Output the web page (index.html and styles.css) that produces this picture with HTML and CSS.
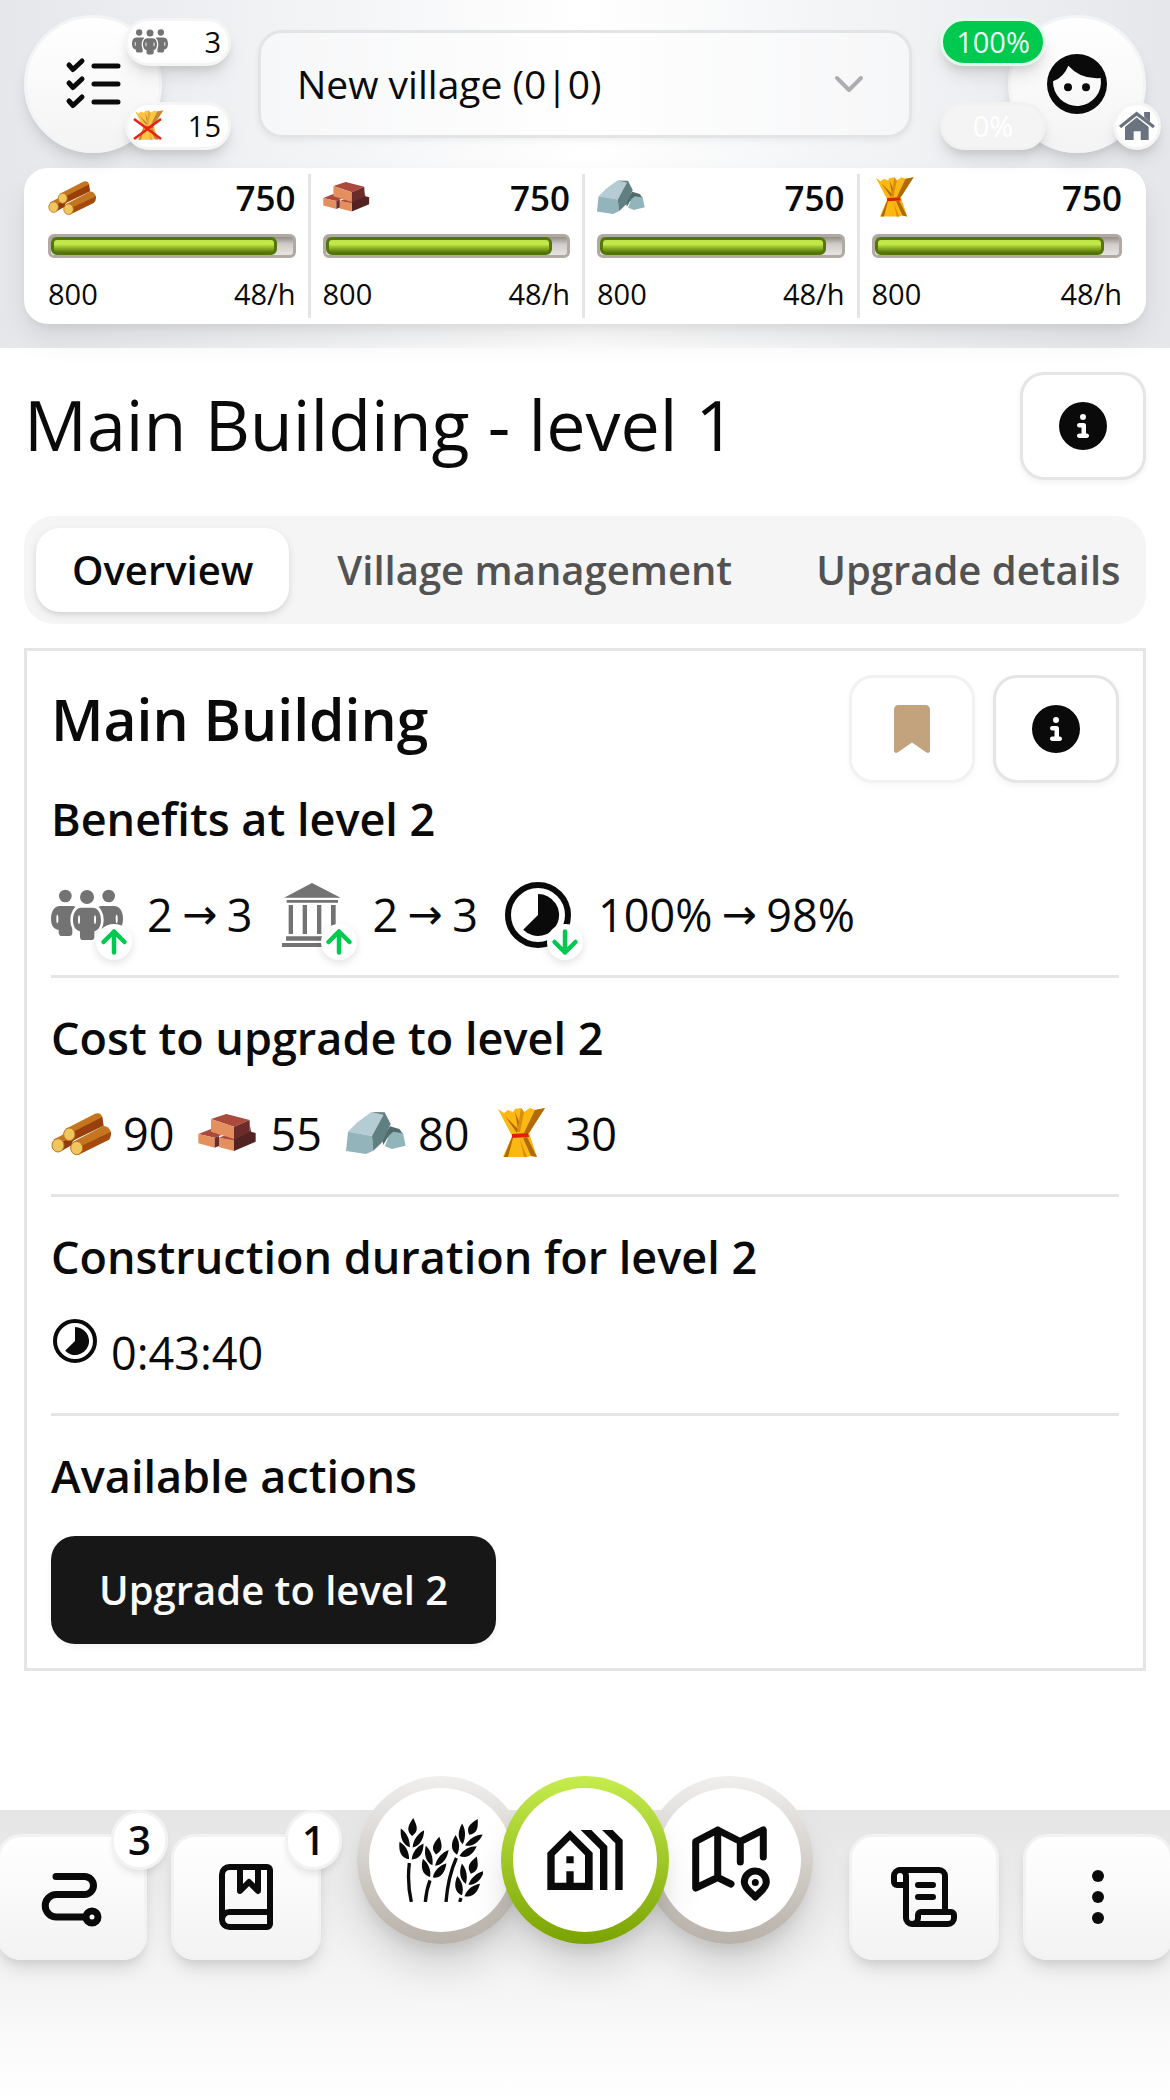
FILE: index.html
```html
<!DOCTYPE html>
<html lang="en">
<head>
<meta charset="utf-8">
<meta name="viewport" content="width=device-width, initial-scale=1">
<title>Main Building - level 1</title>
<link rel="stylesheet" href="styles.css">
</head>
<body>
<svg class="sprite" aria-hidden="true">
  <symbol id="i-info" viewBox="0 0 512 512"><path d="M256 512A256 256 0 1 0 256 0a256 256 0 1 0 0 512zM216 336h24V272H216c-13.3 0-24-10.7-24-24s10.7-24 24-24h48c13.3 0 24 10.7 24 24v88h8c13.3 0 24 10.7 24 24s-10.7 24-24 24H216c-13.3 0-24-10.7-24-24s10.7-24 24-24zm40-208a32 32 0 1 1 0 64 32 32 0 1 1 0-64z"/></symbol>
  <symbol id="i-people" viewBox="33 27 216 216">
    <g fill="#737373">
      <circle cx="76" cy="78" r="19"/><circle cx="206" cy="78" r="19"/><circle cx="141" cy="81" r="21"/>
      <path d="M60 108H96C105 108 110 112 108 118L97 140V190Q97 198 88 198H66Q57 198 56 188V180C40 178 33 165 33 147C33 125 42 108 60 108Z"/>
      <path d="M222 108H186C177 108 172 112 174 118L185 140V190Q185 198 194 198H216Q225 198 226 188V180C242 178 249 165 249 147C249 125 240 108 222 108Z"/>
      <path stroke="#fff" stroke-width="16" paint-order="stroke" d="M124 113H158C174 113 183 130 183 150C183 168 176 180 163 184V200Q163 210 153 210H129Q120 210 120 200V184C106 180 99 168 99 150C99 130 108 113 124 113Z"/>
    </g>
    <g fill="#fff"><ellipse cx="52" cy="147" rx="3" ry="13"/><ellipse cx="230" cy="147" rx="3" ry="13"/><ellipse cx="117" cy="149" rx="3" ry="13"/><ellipse cx="165" cy="149" rx="3" ry="13"/></g>
  </symbol>
  <symbol id="i-bank" viewBox="708 27 216 216"><path fill="#737373" d="M732 83L816 39L902 83ZM740 90H894V98H740ZM746 105H759V192H746ZM788 105H801V192H788ZM831 105H844V192H831ZM873 105H887V192H873ZM738 199H895V212H738ZM726 219H907V231H726Z"/></symbol>
  <symbol id="i-clock" viewBox="0 0 72 72"><circle cx="36" cy="36" r="30" fill="none" stroke="currentColor" stroke-width="6"/><path d="M36 36V15A21 21 0 1 1 21.2 50.8Z"/></symbol>
  <symbol id="i-wood" viewBox="33 705 180 180">
    <path fill="#c4751f" d="M40 812L76 793L104 812L70 842Z"/><path fill="#8f3c0c" d="M66 818L100 806L96 828L64 846Z"/>
    <path fill="#c4751f" d="M100 818L190 771Q206 770 213 790L128 838Z"/><path fill="#a34a0c" d="M126 830L213 788Q214 808 204 814L116 857Z"/>
    <path fill="#c4751f" d="M76 780L165 734Q184 728 188 748L98 798Z"/><path fill="#983f0b" d="M100 788L187 744L191 770L98 815Z"/>
    <g fill="#eec65b" stroke="#bd7020" stroke-width="3"><ellipse cx="54" cy="829" rx="18" ry="20"/><ellipse cx="88" cy="796" rx="17" ry="19"/><ellipse cx="110" cy="837" rx="18" ry="20"/></g>
  </symbol>
  <symbol id="i-brick" viewBox="477 705 180 180">
    <path fill="#532323" d="M585 808L632 786V764L636 788L650 792V818L585 846Z"/>
    <path fill="#aa4a3d" d="M516 750L562 735L632 753L585 773ZM478 795L516 780L556 794L527 806ZM540 806L562 797L585 804V816Z"/>
    <path fill="#e48f5e" d="M516 750L585 773V810L516 788ZM478 795L527 806V836L478 823ZM540 806L585 814V846L540 834Z"/>
    <path fill="#6c2d2a" d="M585 773L632 753V790L585 812ZM527 806L540 801V831L527 836Z"/>
  </symbol>
  <symbol id="i-stone" viewBox="924 705 180 180">
    <path fill="#4f6b6c" d="M1056 772L1084 780L1096 796L1048 806L1036 828L1032 810Z"/>
    <path fill="#b5ccd4" d="M930 788L958 760L999 730L1042 736L1002 801Z"/>
    <path fill="#93b4bb" d="M930 788L1002 801L1006 845L984 855L924 846Z"/>
    <path fill="#607f81" d="M999 729L1040 730L1058 765L1034 818L1006 845L1002 801L1037 737Z"/>
    <path fill="#92b5bc" d="M1052 800L1066 788L1095 793L1103 830L1062 840L1041 832Z"/>
  </symbol>
  <symbol id="i-wheat" viewBox="0 0 60 60">
    <path fill="#fbb712" d="M5 5L11 9L15 6L20 8L22 5L28 4L31 8L37 4L42 6L52 4L36 29L44 53L38 52L34 53H10L19 32Z"/>
    <path fill="#b26a08" d="M42 6L52 4L36 29H31ZM34 33L44 53L38 52L30 34ZM20 34L15 53H11L19 33ZM12 12L24 29L27 20L22 8L25 25Z"/>
    <path fill="#dc8d0b" d="M28 4L31 8L27 28H24ZM27 35L31 53H34Z"/>
    <path fill="#de210d" d="M19 30L35 29L36 33L19 34Z"/>
  </symbol>
  <symbol id="i-up" viewBox="0 0 24 24"><path fill="none" stroke="currentColor" stroke-width="3" stroke-linecap="round" stroke-linejoin="round" d="M5 12L12 5L19 12M12 19V5"/></symbol>
  <symbol id="i-down" viewBox="0 0 24 24"><path fill="none" stroke="currentColor" stroke-width="3" stroke-linecap="round" stroke-linejoin="round" d="M5 12L12 19L19 12M12 19V5"/></symbol>
  <g id="ear">
    <path d="M0 -72C-17 -86 -17 -98 0 -126C17 -98 17 -86 0 -72ZM-4 -38C-5 -62 -18 -82 -35 -92C-36 -66 -26 -44 -4 -38ZM4 -38C5 -62 18 -82 35 -92C36 -66 26 -44 4 -38ZM-4 -2C-5 -26 -18 -42 -36 -52C-38 -24 -28 -4 -4 -2ZM4 -2C5 -26 18 -42 36 -52C38 -24 28 -4 4 -2Z"/>
  </g>
</svg>

<header class="topbar">
  <div class="topbar-row">
    <div class="avatar">
      <button class="round-btn" aria-label="Tasks">
        <svg class="icon-60" viewBox="0 0 60 60" fill="none" stroke="currentColor" stroke-width="5" stroke-linecap="round" stroke-linejoin="round"><path d="M6 11L10 15.500L19 7M31 12H55M6 29L10 33.500L19 25M31 30H55M6 47L10 51.500L19 43M31 48H55"/></svg>
      </button>
      <span class="pill pill-stat pill-right pill-top"><svg class="icon-36"><use href="#i-people"/></svg>3</span>
      <span class="pill pill-stat pill-right pill-bottom">
        <svg class="icon-36" viewBox="0 0 36 36"><use href="#i-wheat" width="36" height="36" opacity=".8"/><path d="M2 11L29 31M29 11L2 31" stroke="#ea2013" stroke-width="2.500"/></svg>15</span>
    </div>
    <div class="village">
      <select class="village-select" aria-label="Village"><option>New village (0|0)</option></select>
      <svg class="village-chevron" viewBox="0 0 24 24" fill="none" stroke="currentColor" stroke-width="2" stroke-linecap="round" stroke-linejoin="round"><path d="M6 9l6 6 6-6"/></svg>
    </div>
    <div class="avatar">
      <button class="round-btn" aria-label="Hero">
        <svg class="icon-60" viewBox="351 131 180 180"><path fill-rule="evenodd" d="M441 131A90 90 0 1 1 441 311A90 90 0 1 1 441 131ZM369 213Q402 200 415 166Q452 208 512 203A72 72 0 1 1 369 213Z"/><circle cx="414" cy="231" r="12"/><circle cx="468" cy="231" r="12"/></svg>
      </button>
      <span class="pill pill-left pill-top pill-green">100%</span>
      <span class="pill pill-left pill-bottom pill-faded">0%</span>
      <span class="pill pill-home pill-bottom"><svg class="icon-36" viewBox="567 294 108 108"><path d="M585 350L620 320L656 350V390H632V364H611V390H585ZM643 306H660V336L643 322Z"/><path d="M570 351L620 311L672 351" fill="none" stroke="#fff" stroke-width="18"/><path d="M643 306H660V336L643 322Z"/><path d="M570 351L620 311L672 351" fill="none" stroke="currentColor" stroke-width="10"/></svg></span>
    </div>
  </div>
  <section class="resources" aria-label="Resources">
    <div class="resource">
      <div class="resource-line"><svg class="icon-48"><use href="#i-wood"/></svg><strong class="amount">750</strong></div>
      <div class="bar" role="progressbar" aria-valuenow="750" aria-valuemax="800" aria-label="Wood"><div class="bar-fill" style="width:93.75%"></div></div>
      <div class="resource-line resource-meta"><span>800</span><span>48/h</span></div>
    </div>
    <div class="resource">
      <div class="resource-line"><svg class="icon-48"><use href="#i-brick"/></svg><strong class="amount">750</strong></div>
      <div class="bar" role="progressbar" aria-valuenow="750" aria-valuemax="800" aria-label="Clay"><div class="bar-fill" style="width:93.75%"></div></div>
      <div class="resource-line resource-meta"><span>800</span><span>48/h</span></div>
    </div>
    <div class="resource">
      <div class="resource-line"><svg class="icon-48"><use href="#i-stone"/></svg><strong class="amount">750</strong></div>
      <div class="bar" role="progressbar" aria-valuenow="750" aria-valuemax="800" aria-label="Iron"><div class="bar-fill" style="width:93.75%"></div></div>
      <div class="resource-line resource-meta"><span>800</span><span>48/h</span></div>
    </div>
    <div class="resource">
      <div class="resource-line"><svg class="icon-48"><use href="#i-wheat"/></svg><strong class="amount">750</strong></div>
      <div class="bar" role="progressbar" aria-valuenow="750" aria-valuemax="800" aria-label="Wheat"><div class="bar-fill" style="width:93.75%"></div></div>
      <div class="resource-line resource-meta"><span>800</span><span>48/h</span></div>
    </div>
  </section>
</header>

<main class="content">
  <div class="page-head">
    <h1 class="page-title">Main Building - level 1</h1>
    <button class="icon-btn" aria-label="About this building"><svg class="icon-48"><use href="#i-info"/></svg></button>
  </div>

  <div class="tabs" role="tablist">
    <button class="tab tab-active" role="tab" aria-selected="true">Overview</button>
    <button class="tab" role="tab" aria-selected="false">Village management</button>
    <button class="tab" role="tab" aria-selected="false">Upgrade details</button>
  </div>

  <article class="panel">
    <div class="panel-head">
      <h2 class="panel-title">Main Building</h2>
      <div class="panel-tools">
        <button class="icon-btn icon-btn-muted" aria-label="Bookmark"><svg class="icon-48" viewBox="-64 0 512 512"><path d="M0 48V487.700C0 501.100 10.900 512 24.300 512c5 0 9.900-1.500 14-4.400L192 400 345.700 507.600c4.100 2.900 9 4.400 14 4.400c13.400 0 24.300-10.900 24.300-24.300V48c0-26.500-21.500-48-48-48H48C21.500 0 0 21.500 0 48z"/></svg></button>
        <button class="icon-btn" aria-label="Details"><svg class="icon-48"><use href="#i-info"/></svg></button>
      </div>
    </div>

    <section class="block">
      <h3 class="block-title">Benefits at level 2</h3>
      <div class="values">
        <div class="benefit">
          <span class="benefit-icon"><svg class="icon-72"><use href="#i-people"/></svg><span class="trend"><svg class="icon-36"><use href="#i-up"/></svg></span></span>
          <span class="change"><span>2</span><span class="arrow">→</span><span>3</span></span>
        </div>
        <div class="benefit">
          <span class="benefit-icon"><svg class="icon-72"><use href="#i-bank"/></svg><span class="trend"><svg class="icon-36"><use href="#i-up"/></svg></span></span>
          <span class="change"><span>2</span><span class="arrow">→</span><span>3</span></span>
        </div>
        <div class="benefit">
          <span class="benefit-icon"><svg class="icon-72"><use href="#i-clock"/></svg><span class="trend"><svg class="icon-36"><use href="#i-down"/></svg></span></span>
          <span class="change"><span>100%</span><span class="arrow">→</span><span>98%</span></span>
        </div>
      </div>
    </section>

    <section class="block">
      <h3 class="block-title">Cost to upgrade to level 2</h3>
      <div class="values">
        <span class="cost"><svg class="icon-60"><use href="#i-wood"/></svg>90</span>
        <span class="cost"><svg class="icon-60"><use href="#i-brick"/></svg>55</span>
        <span class="cost"><svg class="icon-60"><use href="#i-stone"/></svg>80</span>
        <span class="cost"><svg class="icon-60"><use href="#i-wheat"/></svg>30</span>
      </div>
    </section>

    <section class="block">
      <h3 class="block-title">Construction duration for level 2</h3>
      <div class="values">
        <span class="cost duration"><svg class="icon-48"><use href="#i-clock"/></svg>0:43:40</span>
      </div>
    </section>

    <section class="block">
      <h3 class="block-title">Available actions</h3>
      <button class="primary-btn">Upgrade to level 2</button>
    </section>
  </article>
</main>

<nav class="bottom-nav" aria-label="Main">
  <div class="nav-group">
    <a class="nav-btn" href="#quests" aria-label="Quests">
      <svg class="icon-72" viewBox="0 0 72 72" fill="none" stroke="currentColor" stroke-width="7" stroke-linecap="round"><path d="M20 15.500H48.500A9 9 0 0 1 48.500 33.500H20.500A11.250 11.250 0 0 0 20.500 56H48"/><circle cx="56" cy="56" r="6"/></svg>
      <span class="count">3</span>
    </a>
    <a class="nav-btn" href="#reports" aria-label="Adventures">
      <svg class="icon-72" viewBox="0 0 24 24" fill="none" stroke="currentColor" stroke-width="2" stroke-linecap="round" stroke-linejoin="round"><path d="M10 2v8l3-3 3 3V2"/><path d="M4 19.500v-15A2.500 2.500 0 0 1 6.500 2H19a1 1 0 0 1 1 1v18a1 1 0 0 1-1 1H6.500a1 1 0 0 1 0-5H20"/></svg>
      <span class="count">1</span>
    </a>
  </div>
  <div class="nav-places">
    <a class="place" href="#fields" aria-label="Resource fields"><span class="place-face">
      <svg class="icon-84" viewBox="147 144 252 252"><path d="M178 279Q171 340 184 396M240 331Q229 360 226 396M319 264Q294 320 288 396M333 384L329 396" fill="none" stroke="currentColor" stroke-width="10"/><use href="#ear" transform="translate(181 270) rotate(4)"/><use href="#ear" transform="translate(244 324) rotate(11)"/><use href="#ear" transform="translate(324 258) rotate(28)"/><use href="#ear" transform="translate(339 379) rotate(19)"/></svg></span></a>
    <a class="place place-current" href="#village" aria-label="Village" aria-current="page"><span class="place-face">
      <svg class="icon-90" viewBox="570 135 270 270"><path fill-rule="evenodd" d="M592 248L660 181L728 248V360H592ZM614 256V338H649V304H671V338H705V256L660 210ZM649 259H671V280H649ZM692 180H724L772 229V360H750V238ZM756 180H788L818 210V360H796V220Z"/></svg></span></a>
    <a class="place" href="#map" aria-label="Map"><span class="place-face">
      <svg class="icon-84" viewBox="0 0 84 84" fill="none" stroke="currentColor" stroke-width="7" stroke-linecap="round" stroke-linejoin="round"><path d="M44 66L30.700 59.500L8.700 70V23.500L30.700 12L53.300 23.500L76.300 12V39M30.700 12V59.500M53.300 23.500V44"/><path d="M68.300 79C65.500 75 57.300 71 57.300 64A11 11 0 0 1 79.300 64C79.300 71 71 75 68.300 79Z"/><circle cx="68.300" cy="64.500" r="3.500" fill="currentColor" stroke="none"/></svg></span></a>
  </div>
  <div class="nav-group">
    <a class="nav-btn" href="#log" aria-label="Reports">
      <svg class="icon-72" viewBox="0 0 24 24" fill="none" stroke="currentColor" stroke-width="2" stroke-linecap="round" stroke-linejoin="round"><path d="M15 12h-5M15 8h-5M19 17V5a2 2 0 0 0-2-2H4"/><path d="M8 21h12a2 2 0 0 0 2-2v-1a1 1 0 0 0-1-1H11a1 1 0 0 0-1 1v1a2 2 0 1 1-4 0V5a2 2 0 1 0-4 0v2a1 1 0 0 0 1 1h3"/></svg>
    </a>
    <a class="nav-btn" href="#more" aria-label="More">
      <svg class="icon-72" viewBox="0 0 24 24"><circle cx="12" cy="5" r="2"/><circle cx="12" cy="12" r="2"/><circle cx="12" cy="19" r="2"/></svg>
    </a>
  </div>
</nav>
</body>
</html>
```
FILE: styles.css
```css
*, *::before, *::after { box-sizing: border-box; }

body {
  margin: 0;
  min-height: 100vh;
  display: flex;
  flex-direction: column;
  background: #fff;
  color: #0a0a0a;
  font-family: "Open Sans", "Noto Sans", sans-serif;
  font-size: 45px;
  line-height: 72px;
}

h1, h2, h3 { margin: 0; }
button, select { font: inherit; color: inherit; margin: 0; }
button { cursor: pointer; }
a { color: inherit; text-decoration: none; }
svg { display: block; flex: none; fill: currentColor; }
svg[fill="none"] { fill: none; }

.sprite { position: absolute; width: 0; height: 0; }
.icon-36 { width: 36px; height: 36px; }
.icon-48 { width: 48px; height: 48px; }
.icon-60 { width: 60px; height: 60px; }
.icon-72 { width: 72px; height: 72px; }
.icon-84 { width: 84px; height: 84px; }
.icon-90 { width: 90px; height: 90px; }

/* Top bar */
.topbar {
  display: flex;
  flex-direction: column;
  gap: 15px;
  padding: 15px 24px 24px;
  background: linear-gradient(90deg, #e5e7eb, #fff 50%, #e5e7eb);
}

.topbar-row { display: flex; align-items: center; gap: 96px; }
.avatar { position: relative; flex: none; }

.round-btn {
  display: grid;
  place-items: center;
  width: 138px;
  height: 138px;
  padding: 0;
  border: 3px solid #f3f4f6;
  border-radius: 50%;
  background: linear-gradient(#fff, #f4f4f4);
  box-shadow: 0 12px 18px -3px rgb(0 0 0 / 10%), 0 6px 9px -3px rgb(0 0 0 / 8%);
}

.pill {
  position: absolute;
  display: flex;
  align-items: center;
  justify-content: center;
  width: 106px;
  height: 48px;
  border: 3px solid #f5f5f5;
  border-radius: 24px;
  background: #fff;
  font-size: 29px;
  line-height: 42px;
  box-shadow: 0 12px 18px -3px rgb(0 0 0 / 10%), 0 6px 9px -3px rgb(0 0 0 / 10%);
}

.pill-stat { justify-content: space-between; padding: 0 7px 0 4px; }
.pill-top { top: 3px; }
.pill-bottom { top: 87px; }
.pill-right { left: 101px; }
.pill-left { right: 100px; }
.pill-green { background: #00c950; border-color: #e3faec; color: #effdf4; }
.pill-faded { background: #f4f4f4; border-color: #f1f1f2; color: #fff; }
.pill-home { width: 48px; right: -15px; color: #6b7280; }

.village { flex: 1; display: grid; align-items: center; }

.village-select {
  grid-area: 1 / 1;
  width: 100%;
  height: 108px;
  padding: 0 36px;
  border: 3px solid #e3e4e6;
  border-radius: 24px;
  background: rgb(255 255 255 / 40%);
  font-size: 39px;
  appearance: none;
  box-shadow: 0 3px 6px rgb(0 0 0 / 5%);
}

.village-chevron {
  grid-area: 1 / 1;
  justify-self: end;
  width: 48px;
  height: 48px;
  margin-right: 39px;
  color: #adadaf;
  pointer-events: none;
}

.resources {
  display: grid;
  grid-template-columns: repeat(4, 1fr);
  padding: 6px 12px;
  border-radius: 24px;
  background: #fff;
  box-shadow: 0 15px 30px -3px rgb(0 0 0 / 10%), 0 6px 9px -3px rgb(0 0 0 / 6%);
}

.resource {
  display: grid;
  gap: 12px;
  padding: 0 12px;
  border-right: 3px solid #e5e5e5;
}

.resource:last-child { border-right: 0; }

.resource-line {
  display: flex;
  align-items: center;
  justify-content: space-between;
  line-height: 48px;
}

.resource-meta { font-size: 29px; }
.amount { font-size: 35px; font-weight: 600; }

.bar {
  height: 24px;
  border: 3px solid #b0aaa3;
  border-radius: 6px;
  background: linear-gradient(#938d88, #cfcbc8 40%, #e7e5e4);
}

.bar-fill {
  height: 18px;
  border: 3px solid #53750a;
  border-radius: 6px;
  background: linear-gradient(#bfe544, #c3e84c 35%, #7fa51c 75%, #5b8008);
}

/* Page content */
.content {
  display: flex;
  flex-direction: column;
  padding: 24px 24px 48px;
}

.page-head {
  display: flex;
  align-items: flex-start;
  justify-content: space-between;
  margin-bottom: 36px;
}

.page-title { font-size: 70px; font-weight: 400; line-height: 104px; }

.icon-btn {
  display: grid;
  place-items: center;
  width: 126px;
  height: 108px;
  padding: 0;
  border: 3px solid #e5e5e5;
  border-radius: 24px;
  background: #fff;
  box-shadow: 0 3px 6px rgb(0 0 0 / 5%);
}

.icon-btn-muted {
  border-color: #f2f2f2;
  color: #c3a37e;
  box-shadow: 0 3px 6px rgb(0 0 0 / 3%);
}

.tabs {
  display: flex;
  gap: 12px;
  margin-bottom: 24px;
  padding: 12px 0 12px 12px;
  border-radius: 30px;
  background: #f5f5f5;
}

.tab {
  height: 84px;
  padding: 0 36px;
  border: 0;
  border-radius: 24px;
  background: none;
  color: #525252;
  font-size: 40px;
  font-weight: 600;
  white-space: nowrap;
}

.tab:last-child { padding-right: 24px; }

.tab-active {
  background: #fff;
  color: #0a0a0a;
  box-shadow: 0 3px 9px rgb(0 0 0 / 10%), 0 3px 6px -3px rgb(0 0 0 / 10%);
}

.panel { padding: 24px; border: 3px solid #e5e5e5; }
.panel-head { display: flex; justify-content: space-between; align-items: flex-start; }
.panel-title { font-size: 57px; font-weight: 600; line-height: 88px; }
.panel-tools { display: flex; gap: 18px; }

.block {
  display: flex;
  flex-direction: column;
  align-items: flex-start;
  gap: 24px;
  padding: 24px 0;
  border-bottom: 3px solid #e5e5e5;
}

.panel-head + .block { padding-top: 0; }
.block:last-child { padding-bottom: 0; border-bottom: 0; }
.block-title { font-size: 45px; font-weight: 600; }

.values { display: flex; align-items: center; gap: 24px; }
.benefit { display: flex; align-items: center; gap: 24px; }
.benefit-icon { position: relative; }

.trend {
  position: absolute;
  right: -9px;
  bottom: -9px;
  border-radius: 50%;
  background: #fff;
  color: #00c950;
  box-shadow: 0 3px 9px rgb(0 0 0 / 12%);
}

.change { display: flex; }

.arrow {
  width: 54px;
  font-family: "DejaVu Sans", sans-serif;
  font-size: 42px;
  text-align: center;
}

.cost { display: flex; align-items: center; gap: 12px; }
.duration svg { align-self: flex-start; }

.primary-btn {
  height: 108px;
  padding: 0 48px;
  border: 0;
  border-radius: 24px;
  background: #171717;
  color: #fafafa;
  font-size: 40px;
  font-weight: 600;
  box-shadow: 0 3px 6px rgb(0 0 0 / 5%);
}

/* Bottom navigation */
.bottom-nav {
  display: flex;
  justify-content: center;
  align-items: flex-start;
  gap: 36px;
  margin-top: auto;
  padding: 24px 0 140px;
  overflow-x: clip;
  background: linear-gradient(#e5e5e5, #fff);
}

.nav-group { display: flex; flex: none; gap: 24px; }

.nav-btn {
  position: relative;
  display: grid;
  place-items: center;
  width: 150px;
  height: 126px;
  border: 3px solid #f2f2f2;
  border-radius: 24px;
  background: linear-gradient(#fff, #f3f3f3);
  box-shadow: 0 12px 18px -3px rgb(0 0 0 / 10%), 0 6px 9px -3px rgb(0 0 0 / 8%);
}

.count {
  position: absolute;
  top: -27px;
  right: -24px;
  width: 57px;
  height: 60px;
  border: 3px solid #f2f2f2;
  border-radius: 30px;
  background: #fff;
  font-size: 40px;
  font-weight: 600;
  line-height: 54px;
  text-align: center;
  box-shadow: 0 6px 9px -3px rgb(0 0 0 / 12%);
}

.nav-places { display: flex; flex: none; margin-top: -58px; }

.place {
  width: 168px;
  height: 168px;
  padding: 12px;
  border-radius: 50%;
  background: linear-gradient(#f0efee, #b8b1a9);
  box-shadow: 0 30px 45px -9px rgb(0 0 0 / 14%), 0 12px 18px -6px rgb(0 0 0 / 10%);
}

.place + .place { margin-left: -24px; }

.place-current {
  position: relative;
  z-index: 1;
  background: linear-gradient(#c6ec4e, #7aa302);
}

.place-face {
  display: grid;
  place-items: center;
  height: 144px;
  border-radius: 50%;
  background: #fff;
}
```
